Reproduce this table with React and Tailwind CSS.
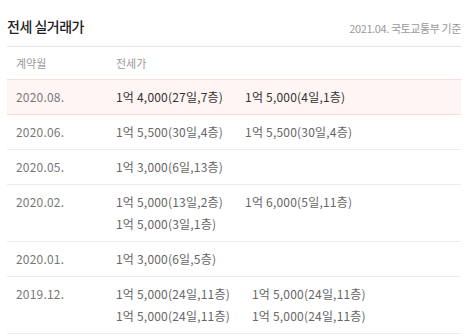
import React from "react";

const rows = [
  { month: "2020.08.", prices: ["1억 4,000(27일,7층)", "1억 5,000(4일,1층)"], hot: true },
  { month: "2020.06.", prices: ["1억 5,500(30일,4층)", "1억 5,500(30일,4층)"] },
  { month: "2020.05.", prices: ["1억 3,000(6일,13층)"] },
  { month: "2020.02.", prices: ["1억 5,000(13일,2층)", "1억 6,000(5일,11층)", "1억 5,000(3일,1층)"] },
  { month: "2020.01.", prices: ["1억 3,000(6일,5층)"] },
  {
    month: "2019.12.",
    prices: ["1억 5,000(24일,11층)", "1억 5,000(24일,11층)", "1억 5,000(24일,11층)", "1억 5,000(24일,11층)"],
  },
];

export default function App() {
  return (
    <div
      className="w-[466px] h-[336px] bg-white overflow-hidden"
      style={{ fontFamily: '"Noto Sans CJK KR", "Noto Sans", sans-serif' }}
    >
      <div className="ml-[7px] mr-[5px]">
        <div className="flex items-end justify-between h-[47px] pb-[10px] border-b border-[#e5e5e5]">
          <h2 className="text-[14px] leading-[20px] font-medium tracking-[-0.5px] text-[#222]">전세 실거래가</h2>
          <span className="text-[11px] leading-[16px] tracking-[-0.4px] text-[#999]">2021.04. 국토교통부 기준</span>
        </div>

        <div className="flex items-center h-[32px] pl-[9px] text-[11px] text-[#999]">
          <div className="w-[100px] shrink-0">계약월</div>
          <div>전세가</div>
        </div>

        {rows.map((r) => (
          <div
            key={r.month}
            className={
              r.hot
                ? "flex pl-[9px] py-[6px] bg-[#fff5f5] border-y border-[#fbdcdc] text-[12px] leading-[22px]"
                : "flex pl-[9px] py-[6px] border-b border-[#ececec] text-[12px] leading-[22px]"
            }
          >
            <div className="w-[100px] shrink-0 text-[#777] tracking-[0.2px]">{r.month}</div>
            <div
              className={
                r.hot
                  ? "flex flex-wrap max-w-[262px] gap-x-[22px] text-[#333] tracking-[0.2px]"
                  : "flex flex-wrap max-w-[262px] gap-x-[22px] text-[#666] tracking-[0.2px]"
              }
            >
              {r.prices.map((p, i) => (
                <span key={i}>{p}</span>
              ))}
            </div>
          </div>
        ))}
      </div>
    </div>
  );
}
